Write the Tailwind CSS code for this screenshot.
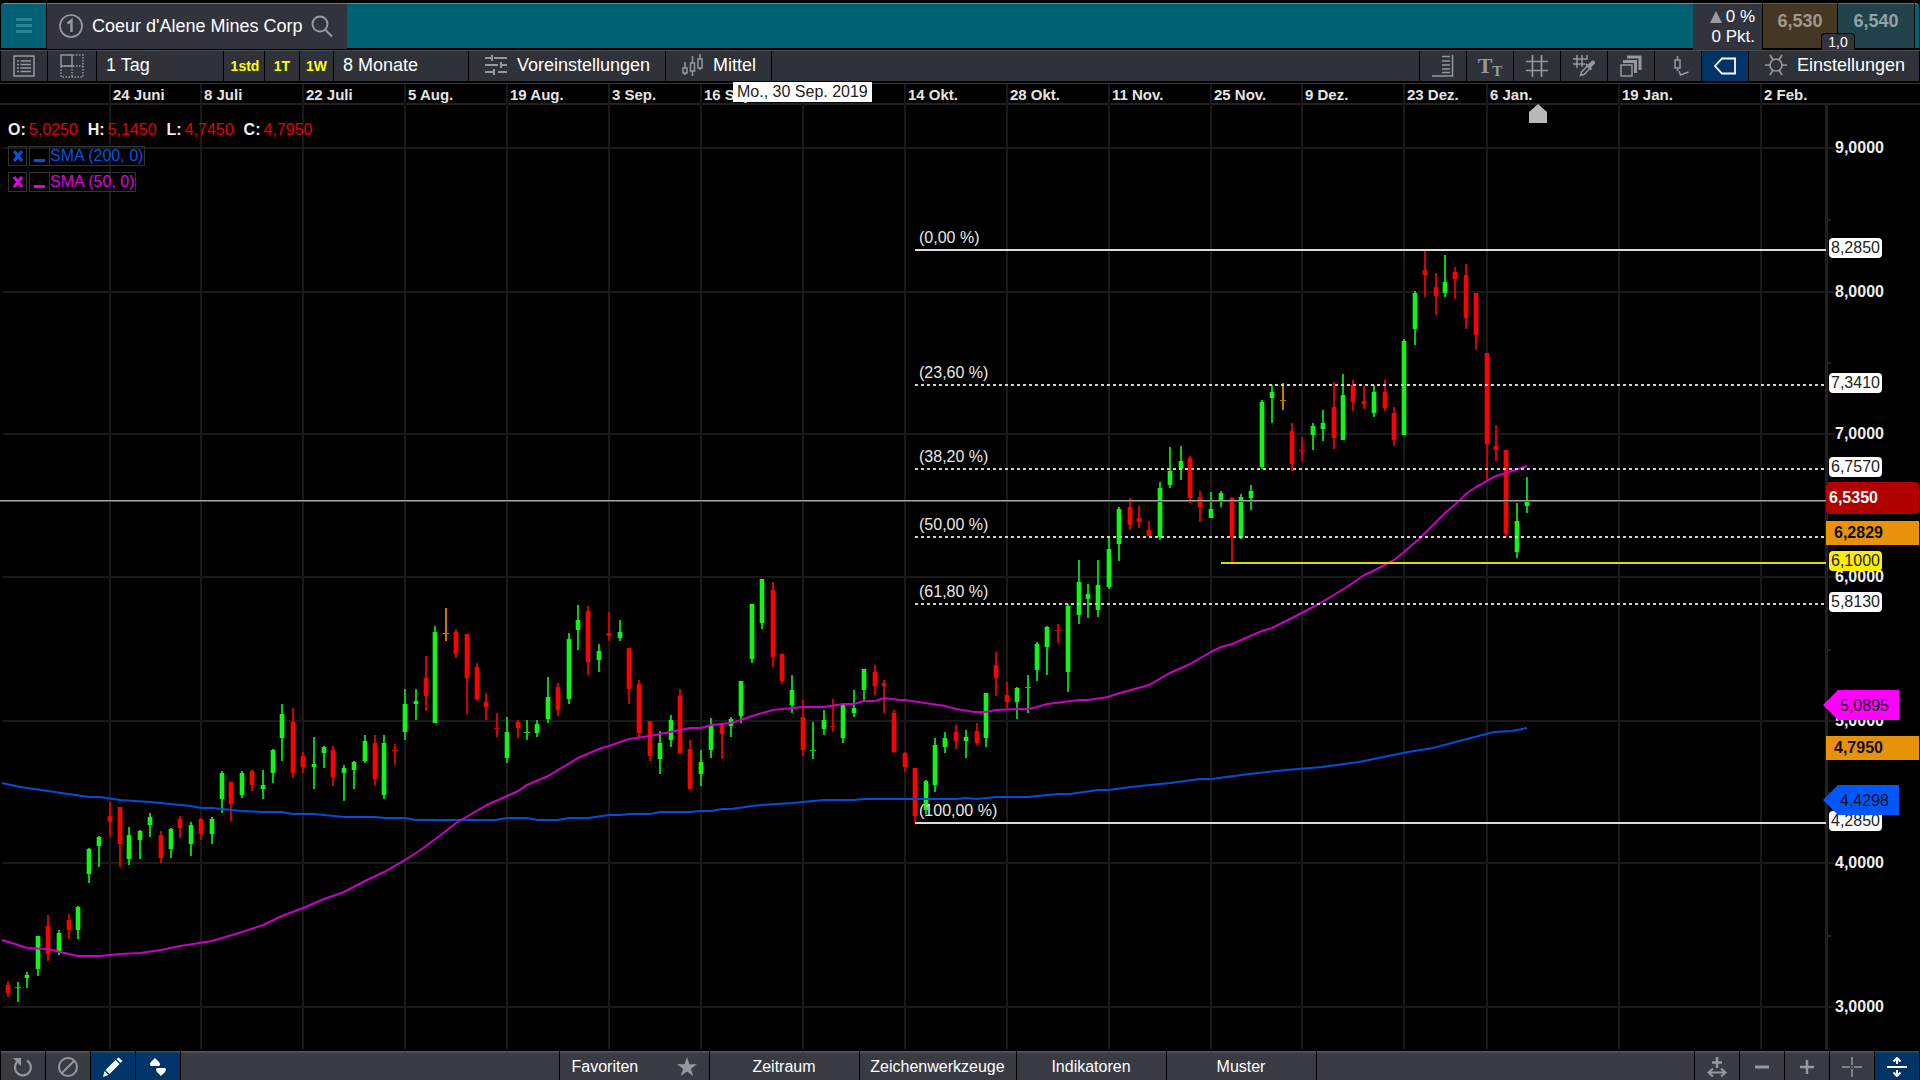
<!DOCTYPE html>
<html lang="de">
<head>
<meta charset="utf-8">
<title>Coeur d'Alene Mines Corp – Chart</title>
<script src="https://cdn.jsdelivr.net/npm/@tailwindcss/browser@4"></script>
</head>
<body class="bg-black font-['Liberation_Sans',Arial,sans-serif] text-white">
<div class="flex h-screen min-w-[1280px] flex-col overflow-hidden bg-black">

  <!-- Title bar -->
  <header class="flex h-[50px] shrink-0 items-start px-px pt-[3px]">
    <button aria-label="Menü" class="flex h-[45px] w-[45px] items-center justify-center rounded-tl border-t border-[#20a8c8] bg-[#006172]">
      <svg class="h-4 w-4" viewBox="0 0 16 16" fill="#2b8494"><path d="M0 0h16v3H0zM0 6h16v3H0zM0 12h16v3H0z"/></svg>
    </button>
    <button class="ml-px flex h-[46px] w-[300px] items-center border-t border-[#6f7378] bg-[#31343c] pb-0.5 pl-3 text-[18px] leading-6 whitespace-nowrap">
      <svg class="h-6 w-6 shrink-0" viewBox="0 0 24 24" fill="none" stroke="#9a9b9e"><circle cx="12" cy="12" r="11" stroke-width="1.7"/><path d="M8.5 9.5 12.500 6.500V18" stroke-width="2.4"/></svg>
      <span class="ml-[9px]">Coeur d'Alene Mines Corp</span>
      <svg class="ml-2 h-6 w-6 shrink-0" viewBox="0 0 24 24" fill="none" stroke="#9a9b9e" stroke-width="1.9"><circle cx="9" cy="10" r="7.500"/><path d="M14 15.500 21 22.500"/></svg>
    </button>
    <div class="h-[45px] flex-1 border-t border-[#20a8c8] bg-[#006172]"></div>
    <div class="flex h-[47px] w-[69px] flex-col items-end justify-center border-t border-[#6f7378] bg-[#31343c] pr-[7px] text-[17px] leading-5">
      <span class="flex items-center gap-1"><svg class="h-3 w-3" viewBox="0 0 12 12" fill="#9a9b9e"><path d="M6 0 12 12H0z"/></svg>0 %</span>
      <span>0 Pkt.</span>
    </div>
    <div class="relative flex">
      <button class="ml-px h-[45px] w-[74px] border-t border-[#665a42] bg-[#443723] pb-[10px] text-[18px] font-bold text-[#a09888]">6,530</button>
      <button class="ml-px h-[45px] w-[76px] border-t border-[#52767e] bg-[#21424b] pb-[10px] text-[18px] font-bold text-[#8fa3a7]">6,540</button>
      <span class="absolute top-[30px] left-[59px] flex h-[17px] w-[34px] items-center justify-center rounded-t border border-b-0 border-black bg-[#31343c] text-sm leading-4">1,0</span>
    </div>
    <div class="ml-px h-[45px] w-1 rounded-tr border-t border-[#20a8c8] bg-[#006172]"></div>
  </header>

  <!-- Chart toolbar -->
  <nav class="flex h-[31px] shrink-0 gap-px border-t border-[#484b50] bg-black px-px text-[18px] whitespace-nowrap">
    <button aria-label="Liste" class="flex w-[46px] items-center justify-center bg-[#2f3239]">
      <svg class="h-[22px] w-[22px]" viewBox="0 0 22 22" fill="none" stroke="#97989b" stroke-width="1.500"><path d="M1 1h20v20H1zM7.500 6H18M7.500 9.500H18M7.500 13H18M7.500 16.500H18M4 6h2M4 9.500h2M4 13h2M4 16.500h2"/></svg>
    </button>
    <button aria-label="Layout" class="flex w-12 items-center justify-center bg-[#2f3239]">
      <svg class="h-6 w-6" viewBox="0 0 24 24" fill="none" stroke="#97989b" stroke-width="1.500"><path d="M1 1h11v11H1z"/><path d="M13 1h10v22H1V13M1 12h22M12 12v11" stroke-dasharray="1.5 1.500"/></svg>
    </button>
    <button class="w-[126px] bg-[#2f3239] pb-0.5 pl-[9px] text-left">1 Tag</button>
    <button class="w-10 bg-[#2f3239] pl-0.5 text-sm font-bold text-[#ffff00]">1std</button>
    <button class="w-[34px] bg-[#2f3239] text-sm font-bold text-[#ffff00]">1T</button>
    <button class="w-[33px] bg-[#2f3239] text-sm font-bold text-[#ffff00]">1W</button>
    <button class="w-[134px] bg-[#2f3239] pb-0.5 pl-[9px] text-left">8 Monate</button>
    <button class="flex w-[196px] items-center gap-[10px] bg-[#2f3239] pb-0.5 pl-4">
      <svg class="h-[22px] w-[22px]" viewBox="0 0 22 22" fill="none" stroke="#97989b" stroke-width="2"><path d="M0 4h7M9 4h13M7 1v6M0 11h13M17 11h5M16 8v6M0 18h9M13 18h9M9 15v6"/></svg>Voreinstellungen
    </button>
    <button class="flex w-[105px] items-center gap-[9px] bg-[#2f3239] pb-0.5 pl-4">
      <svg class="h-[22px] w-[22px]" viewBox="0 0 22 22" fill="none" stroke="#97989b" stroke-width="1.500"><path d="M3 8v6M1 14h4v5H1zM3 19v2M10.500 2v7M8.500 9h4v8h-4zM10.500 17v5M18 0v5M16 5h4v9h-4zM18 14v2"/></svg>Mittel
    </button>
    <div class="flex-1 bg-[#2f3239]"></div>
    <button aria-label="Preisachse" class="flex w-[46px] items-center justify-center bg-[#2f3239]">
      <svg class="h-[22px] w-[22px]" viewBox="0 0 22 22" fill="none" stroke="#97989b" stroke-width="1.500"><path d="M20.500 0v21M0 21h21.500M10 1.500h8M10 6h8M10 10h8M10 14h8M10 17.500h8"/></svg>
    </button>
    <button aria-label="Text" class="flex w-[46px] items-center justify-center bg-[#2f3239] font-['Liberation_Serif',serif] font-bold text-[#97989b]">
      <span class="text-[22px] leading-6">T</span><span class="self-end text-[15px] leading-5">T</span>
    </button>
    <button aria-label="Raster" class="flex w-[46px] items-center justify-center bg-[#2f3239]">
      <svg class="h-[22px] w-[22px]" viewBox="0 0 22 22" fill="none" stroke="#97989b" stroke-width="1.700"><path d="M6.500 0v22M15.500 0v22M0 6.500h22M0 15.500h22"/></svg>
    </button>
    <button aria-label="Rasterfarbe" class="flex w-[46px] items-center justify-center bg-[#2f3239]">
      <svg class="h-[22px] w-[22px]" viewBox="0 0 22 22" fill="none" stroke="#97989b" stroke-width="1.500"><path d="M4 0v13M9 0v12M0 4h13M0 9h12M14 0v5"/><path d="M7.500 20.500 8.500 17 14.500 11l2.500 2.500-6 6z"/><path d="M13 9l5.500 5.500" stroke-width="2"/><path d="M16.500 11 20 7.500" stroke-width="4" stroke-linecap="round"/></svg>
    </button>
    <button aria-label="Fenster" class="flex w-[46px] items-center justify-center bg-[#2f3239]">
      <svg class="h-[22px] w-[22px]" viewBox="0 0 22 22" fill="none" stroke="#97989b"><path d="M1 10h11v11H1z" stroke-width="1.500"/><path d="M3 6.500h12.500V18M7 2h13v13" stroke-width="3"/></svg>
    </button>
    <button aria-label="Kerze" class="flex w-[46px] items-center justify-center bg-[#2f3239]">
      <svg class="h-[22px] w-[22px]" viewBox="0 0 22 22" fill="none" stroke="#97989b" stroke-width="1.500"><path d="M10.500 1v4M8 5h5v8H8zM10.500 13v3M12 16l1.500 4 8-3"/></svg>
    </button>
    <button aria-label="Preismarke" class="flex w-[46px] items-center justify-center bg-[#003366]">
      <svg class="h-[22px] w-[22px]" viewBox="0 0 22 22" fill="none" stroke="#fff" stroke-width="1.800"><path d="M1 11 8 3.500h13v15H8z"/></svg>
    </button>
    <button class="flex w-[170px] items-center gap-[10px] bg-[#2f3239] pb-0.5 pl-4">
      <svg class="h-[22px] w-[22px]" viewBox="0 0 22 22" fill="none" stroke="#97989b" stroke-width="1.700"><circle cx="11" cy="11" r="6"/><path d="M0 11h5M17 11h5M5 1l3 5M17 1l-3 5M5 21l3-5M17 21l-3-5"/></svg>Einstellungen
    </button>
  </nav>

  <!-- Chart canvas: drawing underneath, labels placed over it -->
  <main id="chart" class="relative flex-1 overflow-hidden bg-black">
    <svg id="plot" class="absolute inset-0 h-full w-full" viewBox="0 81 1920 970" preserveAspectRatio="none"></svg>
    <div id="labels"></div>
    <section class="absolute top-10 left-2 flex flex-col items-start text-base leading-[18px]">
      <dl class="flex gap-[10px]">
        <div class="flex gap-[3px]"><dt class="font-bold text-[#eee]">O:</dt><dd class="text-[#e60000]">5,0250</dd></div>
        <div class="flex gap-[3px]"><dt class="font-bold text-[#eee]">H:</dt><dd class="text-[#e60000]">5,1450</dd></div>
        <div class="flex gap-[3px]"><dt class="font-bold text-[#eee]">L:</dt><dd class="text-[#e60000]">4,7450</dd></div>
        <div class="flex gap-[3px]"><dt class="font-bold text-[#eee]">C:</dt><dd class="text-[#e60000]">4,7950</dd></div>
      </dl>
      <div class="mt-[7px] flex h-5 gap-[2px] text-[#0055e0]">
        <button aria-label="SMA 200 entfernen" class="flex w-[19px] items-center justify-center border border-[#333]"><svg class="h-3 w-3" viewBox="0 0 12 12" stroke="currentColor" stroke-width="3"><path d="M2 1l8 10M10 1 2 11"/></svg></button>
        <div class="flex"><button aria-label="SMA 200 minimieren" class="flex w-[21px] items-end justify-center border border-[#333] pb-[3px]"><span class="h-[3px] w-[11px] bg-current"></span></button><span class="border border-l-0 border-[#333] pr-px">SMA (200, 0)</span></div>
      </div>
      <div class="mt-[6px] flex h-5 gap-[2px] text-[#e000e0]">
        <button aria-label="SMA 50 entfernen" class="flex w-[19px] items-center justify-center border border-[#333]"><svg class="h-3 w-3" viewBox="0 0 12 12" stroke="currentColor" stroke-width="3"><path d="M2 1l8 10M10 1 2 11"/></svg></button>
        <div class="flex"><button aria-label="SMA 50 minimieren" class="flex w-[21px] items-end justify-center border border-[#333] pb-[3px]"><span class="h-[3px] w-[11px] bg-current"></span></button><span class="border border-l-0 border-[#333] pr-px">SMA (50, 0)</span></div>
      </div>
    </section>
  </main>

  <!-- Bottom toolbar -->
  <footer class="flex h-[29px] shrink-0 gap-px bg-black px-px text-base whitespace-nowrap">
    <button aria-label="Zurücksetzen" class="flex w-11 items-center justify-center border-t-2 border-[#4d5056] bg-[#383b42]">
      <svg class="h-5 w-5" viewBox="0 0 20 20" fill="none" stroke="#97989b" stroke-width="2.200"><path d="M14 3.500A8 8 0 1 1 4 5"/><path d="M0 1h8v8z" fill="#97989b" stroke="none"/></svg>
    </button>
    <button aria-label="Deaktivieren" class="flex w-11 items-center justify-center border-t-2 border-[#4d5056] bg-[#383b42]">
      <svg class="h-5 w-5" viewBox="0 0 20 20" fill="none" stroke="#97989b" stroke-width="2"><circle cx="10" cy="10" r="9"/><path d="M4 16 16 4"/></svg>
    </button>
    <button aria-label="Zeichnen" class="flex w-11 items-center justify-center border-t-2 border-[#1a4877] bg-[#003366]">
      <svg class="h-5 w-5" viewBox="0 0 20 20" fill="#fff"><path d="M0 20 1.500 14 5.500 18zM2.500 13 12.500 3l4 4-10 10zM13.500 2l2-1.500 4 3.500-2 2z"/></svg>
    </button>
    <button aria-label="Verschieben" class="flex w-11 items-center justify-center border-t-2 border-[#1a4877] bg-[#003366]">
      <svg class="h-5 w-5" viewBox="0 0 20 20" fill="#fff"><path d="M2 7.500C2 5 5.500 3 7 1c1.500 2 5 4 5 6.500C12 8.500 11 9 10 9H4C3 9 2 8.500 2 7.500zM8 12.500C8 11.500 9 11 10 11h6c1 0 2 .5 2 1.500 0 2.500-3.500 4.500-5 6.500-1.500-2-5-4-5-6.500z"/></svg>
    </button>
    <div class="flex-1 border-t-2 border-[#4d5056] bg-[#383b42]"></div>
    <button class="flex w-[149px] items-center justify-between border-t-2 border-[#4d5056] bg-[#383b42] px-3">Favoriten
      <svg class="h-5 w-5" viewBox="0 0 20 20" fill="#97989b"><path d="m10 0 2.400 7.200H20l-6.100 4.500L16.200 19 10 14.500 3.800 19l2.300-7.300L0 7.200h7.600z"/></svg>
    </button>
    <button class="w-[149px] border-t-2 border-[#4d5056] bg-[#383b42]">Zeitraum</button>
    <button class="w-[156px] border-t-2 border-[#4d5056] bg-[#383b42]">Zeichenwerkzeuge</button>
    <button class="w-[149px] border-t-2 border-[#4d5056] bg-[#383b42]">Indikatoren</button>
    <button class="w-[149px] border-t-2 border-[#4d5056] bg-[#383b42]">Muster</button>
    <div class="flex-1 border-t-2 border-[#4d5056] bg-[#383b42]"></div>
    <button aria-label="Breite anpassen" class="flex w-11 items-center justify-center border-t-2 border-[#4d5056] bg-[#383b42]">
      <svg class="h-5 w-5" viewBox="0 0 20 20" fill="none" stroke="#97989b" stroke-width="2"><path d="M10 0v11M5 5.500h10" stroke-width="2.500"/><path d="M2 15.500h16M6 11.500l-4.500 4 4.500 4M14 11.500l4.500 4-4.500 4"/></svg>
    </button>
    <button aria-label="Verkleinern" class="flex w-11 items-center justify-center border-t-2 border-[#4d5056] bg-[#383b42]">
      <svg class="h-5 w-5" viewBox="0 0 20 20" stroke="#97989b" stroke-width="3"><path d="M3 10h14"/></svg>
    </button>
    <button aria-label="Vergrößern" class="flex w-11 items-center justify-center border-t-2 border-[#4d5056] bg-[#383b42]">
      <svg class="h-5 w-5" viewBox="0 0 20 20" stroke="#97989b" stroke-width="2.500"><path d="M3 10h14M10 3v14"/></svg>
    </button>
    <button aria-label="Fadenkreuz" class="flex w-11 items-center justify-center border-t-2 border-[#4d5056] bg-[#383b42]">
      <svg class="h-5 w-5" viewBox="0 0 20 20" stroke="#97989b" stroke-width="1.500"><path d="M0 10h8M12 10h8M10 0v8M10 12v8M9.300 10h1.500"/></svg>
    </button>
    <button aria-label="Höhe anpassen" class="flex w-11 items-center justify-center border-t-2 border-[#1a4877] bg-[#003366]">
      <svg class="h-5 w-5" viewBox="0 0 20 20" fill="none" stroke="#fff" stroke-width="2"><path d="M0 10h20M10 1v6M10 13v6M6.500 4.500 10 1l3.500 3.500M6.500 15.500 10 19l3.500-3.500"/></svg>
    </button>
  </footer>
</div>

<script>
// Candles: x, high, low, body top, body bottom, colour (g = up, r = down, o = unchanged)
const candles = `8,981,997,985,993,r 18,982,1002,987,988,g 27,972,988,975,978,g 38,936,976,936,969,g 48,915,961,926,954,r
59,930,955,933,952,g 69,914,939,920,930,r 78,906,939,907,930,g 89,848,883,849,874,g 99,836,867,837,846,g
110,802,837,816,822,r 120,807,867,807,844,r 129,827,865,835,859,g 140,830,859,831,840,g 150,813,837,817,825,g
161,831,863,835,858,r 171,828,858,829,849,g 180,816,838,819,828,r 191,822,856,825,844,g 201,818,840,819,834,r
212,817,844,819,834,g 222,771,813,773,799,g 231,782,821,782,804,r 242,771,798,773,795,g 252,770,791,771,785,r
263,770,799,785,789,g 273,749,783,750,773,g 282,704,761,714,738,g 293,708,778,722,773,r 303,752,773,756,767,r
314,737,789,764,767,g 324,746,768,747,753,g 333,746,786,750,777,r 344,765,801,768,773,g 354,761,789,762,770,g
365,735,763,741,761,g 375,735,785,743,779,r 384,735,799,743,795,g 395,744,765,750,751,r 405,689,740,704,732,g
416,689,720,701,704,g 426,656,711,678,696,r 435,626,723,632,723,g 446,608,641,633,634,o 456,629,658,632,654,r
467,634,714,634,678,r 477,663,701,667,699,r 486,693,720,702,707,r 497,713,737,728,729,r 507,717,763,732,758,g
518,720,738,722,728,r 527,720,740,732,733,g 537,720,737,724,733,g 548,677,723,697,719,g 558,683,716,687,710,r
569,633,704,639,699,g 578,605,650,620,630,g 588,606,675,611,662,r 599,644,672,651,660,g 609,612,641,633,636,r
620,620,641,632,638,g 629,648,704,648,689,r 639,680,737,684,733,r 650,721,761,721,756,r 660,731,774,743,759,g
671,715,747,720,740,g 680,689,753,696,753,r 690,740,789,749,789,r 701,750,786,762,774,g 711,718,758,725,750,g
722,724,759,726,734,r 731,717,737,719,726,g 741,681,723,681,716,g 752,604,663,604,659,g 762,579,629,579,623,g
773,582,667,590,657,r 782,654,684,654,681,r 792,675,713,690,705,g 803,700,756,717,750,r 813,722,759,750,751,g
824,710,735,720,729,g 833,699,732,726,727,r 843,704,743,705,738,g 854,690,717,708,713,g 864,669,701,669,690,g
875,665,695,672,686,r 884,680,713,683,686,r 894,710,753,713,752,r 905,752,772,753,767,r 915,768,823,768,816,r
926,780,814,781,810,g 935,738,792,745,785,g 945,732,753,738,747,g 956,725,749,732,741,r 966,730,758,737,741,g
977,723,745,731,743,r 986,693,747,693,738,g 996,652,696,665,678,r 1007,682,708,695,702,r 1017,687,719,688,702,g
1028,675,713,687,688,g 1037,642,681,644,670,g 1047,626,675,627,647,g 1058,624,643,630,631,r 1068,604,692,606,672,g
1079,560,624,582,615,g 1088,584,618,594,599,g 1098,560,617,585,610,g 1109,537,589,549,587,g 1119,507,561,509,544,g
1130,498,530,507,525,r 1139,506,528,518,522,r 1149,521,536,530,536,r 1160,482,540,488,537,g 1170,447,488,471,485,g
1181,446,480,461,469,g 1190,456,503,458,498,r 1200,491,522,497,507,r 1211,492,518,509,518,g 1221,491,507,493,500,g
1232,497,563,498,537,r 1241,494,539,497,538,g 1251,485,510,491,498,g 1262,400,469,402,467,g 1272,385,423,392,398,g
1283,383,410,400,401,o 1292,423,471,431,464,r 1302,437,461,450,451,r 1313,423,450,426,435,g 1323,410,441,423,429,g
1334,382,449,407,438,r 1343,374,440,395,440,g 1353,380,411,385,402,r 1364,386,409,401,404,r 1374,385,417,392,413,g
1385,380,411,392,408,r 1394,407,446,413,440,r 1404,339,435,341,435,g 1415,291,345,293,329,g 1425,250,297,270,275,r
1436,273,315,287,296,r 1445,255,297,282,293,g 1455,267,299,272,279,r 1466,264,329,275,318,r 1476,293,350,293,335,r
1487,353,480,353,444,r 1496,425,461,446,450,r 1506,450,537,450,534,r 1517,503,558,521,552,g 1527,477,513,501,506,g`;
const sma50 = "2,940 15,944 27,948 48,949 60,952 78,956 100,956 120,954 140,953 161,950 180,946 212,941 242,932 263,925 282,916 303,908 324,899 344,892 365,881 384,872 405,860 416,853 426,846 446,831 456,823 487,805 507,796 518,791 527,785 548,776 578,758 599,749 609,746 629,739 650,736 660,734 680,730 690,728 701,728 711,725 731,723 741,720 752,716 773,710 782,709 803,707 824,707 843,704 854,704 864,701 875,701 884,698 900,700 905,700 925,703 945,706 956,709 975,712 986,712 996,710 1017,709 1028,709 1037,707 1047,704 1079,700 1088,700 1108,697 1120,693 1149,685 1170,673 1190,664 1211,652 1221,647 1232,644 1262,631 1272,628 1292,618 1313,607 1334,595 1353,583 1364,575 1375,570 1394,560 1404,552 1420,538 1445,513 1458,502 1466,494 1476,487 1487,481 1496,476 1506,473 1527,466";
const sma200 = "2,783 20,787 48,791 89,797 100,797 120,800 150,802 171,804 191,806 201,808 212,808 242,811 263,812 282,812 293,814 314,814 344,817 375,817 384,818 405,818 416,820 495,820 507,818 527,818 537,820 558,820 569,818 588,818 609,815 620,815 629,814 650,814 660,812 690,812 701,811 711,811 722,809 731,809 752,806 762,805 792,803 824,800 854,800 864,799 956,799 966,798 977,799 996,797 1028,797 1037,796 1058,794 1070,794 1098,790 1109,790 1130,787 1150,785 1170,783 1200,779 1211,779 1249,774 1286,770 1322,767 1359,762 1408,752 1433,748 1463,740 1494,732 1512,731 1527,728";
const dates = [[110,"24 Juni"],[201,"8 Juli"],[303,"22 Juli"],[405,"5 Aug."],[507,"19 Aug."],[609,"3 Sep."],[701,"16 Sep."],[803,""],[905,"14 Okt."],[1007,"28 Okt."],[1109,"11 Nov."],[1211,"25 Nov."],[1302,"9 Dez."],[1404,"23 Dez."],[1487,"6 Jan."],[1619,"19 Jan."],[1761,"2 Feb."]];
const prices = [[148,"9,0000"],[292,"8,0000"],[434,"7,0000"],[577,"6,0000"],[721,"5,0000"],[863,"4,0000"],[1007,"3,0000"]];
const fibs = [[250,"0,00","8,2850"],[385,"23,60","7,3410"],[469,"38,20","6,7570"],[537,"50,00",""],[604,"61,80","5,8130"],[823,"100,00","4,2850"]];

const rect = (x, y, w, h, f) => `<rect x="${x}" y="${y}" width="${w}" height="${h}" fill="${f}"/>`;
let s = rect(0, 83, 1920, 1, "#3a3a3a") + rect(0, 103, 1920, 2, "#222");
for (const [x] of dates) s += rect(x - 1, 84, 2, 965, "#191919");
for (const [y] of prices) s += rect(3, y - 1, 1832, 2, "#191919");
for (const y of [219, 362, 505, 649, 792, 935]) s += rect(1826, y, 5, 2, "#222");
s += rect(1825, 105, 3, 945, "#202020");
const wick = { g: "#00cc10", r: "#d40000", o: "#c87800" }, body = { g: "#14f41a", r: "#ff0000", o: "#c87800" };
for (const c of candles.split(/\s+/)) {
  const [x, hi, lo, t, b] = c.split(",").map(Number), k = c.slice(-1);
  s += rect(x - 1, hi, 2, lo - hi, wick[k]);
  s += b - t < 2 ? rect(x - 3, t, 6, 1, wick[k]) : rect(x - 2, t, 4, b - t, body[k]) + rect(x - 3, t, 1, b - t, wick[k] + "66") + rect(x + 2, t, 1, b - t, wick[k] + "66");
}
s += `<polyline points="${sma200}" fill="none" stroke="#004fdc" stroke-width="2"/>`;
s += `<polyline points="${sma50}" fill="none" stroke="#c800c8" stroke-width="2"/>`;
for (const [y, p] of fibs) {
  const solid = p === "0,00" || p === "100,00";
  s += `<path d="M915 ${y}H${solid ? 1826 : 1824}" stroke="${solid ? "#dcdcdc" : "#d0d0d0"}" stroke-width="2" ${solid ? "" : 'stroke-dasharray="3 3"'}/>`;
}
s += rect(0, 500, 1826, 1, "#a8a8a8") + rect(0, 501, 1826, 1, "#555");
s += rect(1221, 562, 605, 2, "#e0d800");
s += `<path d="M1538 104l9 8v11h-18v-11z" fill="#b8b8b8"/>`;
document.getElementById("plot").innerHTML = s;

// Labels follow the drawing's scale; each is centred vertically on its y
const at = (x, y, cls, t) => `<span class="absolute -translate-y-1/2 whitespace-nowrap ${cls}" style="left:${x / 19.2}%;top:${(y - 81) / 9.7}%">${t}</span>`;
let l = "";
for (const [x, t] of dates) if (t) l += at(x + 3, 95, "text-[15px] leading-4 font-bold text-[#e4e4e4]", t);
l += at(733, 92, "bg-white px-1 text-base leading-5 text-[#222]", "Mo., 30 Sep. 2019");
for (const [y, t] of prices) l += at(1835, y, "text-base leading-4 font-bold text-[#eee]", t);
for (const [y, p, t] of fibs) {
  l += at(919, y - 12, "text-base leading-4 text-[#e8e8e8]", `(${p} %)`);
  if (t) l += at(1829, y - 2, "rounded bg-white px-0.5 text-base leading-5 text-[#222]", t);
}
l += at(1829, 561, "rounded bg-[#ffee00] px-0.5 text-base leading-5 text-[#222]", "6,1000");
l += at(1826, 498, "h-8 w-[93px] rounded bg-[#b00000] pl-[3px] text-base leading-8 font-bold", "6,5350");
l += at(1826, 533, "h-6 w-[93px] bg-[#e8920c] pl-2 text-base leading-6 font-bold text-[#111]", "6,2829");
l += at(1826, 748, "h-6 w-[93px] bg-[#e8920c] pl-2 text-base leading-6 font-bold text-[#111]", "4,7950");
const tag = "h-[30px] w-[76px] pl-[17px] text-base leading-8 text-[#111] [clip-path:polygon(0_50%,15px_0,100%_0,100%_100%,15px_100%)]";
l += at(1823, 705, tag + " bg-[#ff00ff]", "5,0895");
l += at(1823, 800, tag + " bg-[#0057ff]", "4,4298");
document.getElementById("labels").innerHTML = l;
</script>
</body>
</html>
